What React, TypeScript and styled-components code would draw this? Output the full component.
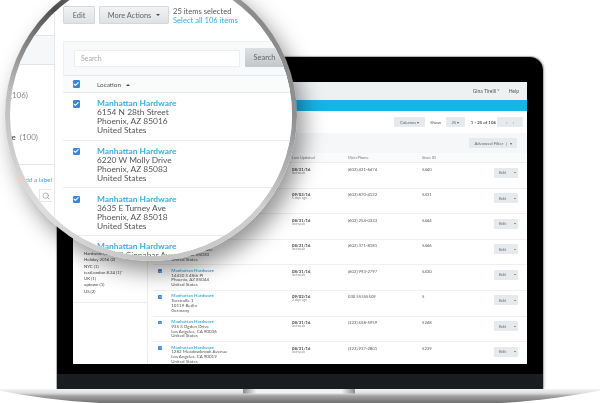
import React from "react";
import styled, { createGlobalStyle } from "styled-components";
import { Check, Search } from "lucide-react";

const GlobalStyle = createGlobalStyle`
    html, body {
        margin: 0;
        padding: 0;
        background: #fff;
    }
`;

const Page = styled.div`
    position: relative;
    width: 600px;
    height: 403px;
    padding-top: 57px;
    box-sizing: border-box;
    overflow: hidden;
    background: #fff;
    font-family: Lato, "Open Sans", sans-serif;
    color: #555;
    filter: blur(0.35px);
`;

/* laptop */
const Lid = styled.div`
    width: 486px;
    height: 332px;
    margin: 0 auto;
    box-sizing: border-box;
    padding: 25px 16px 0;
    border-radius: 13px 13px 0 0;
    background: linear-gradient(#000 0, #000 317px, #1a1d20 317px);
    box-shadow: 0 0 0 1px #b5b5b5, 1px 0 3px rgba(0, 0, 0, 0.25);
`;

const Screen = styled.div`
    height: 282px;
    overflow: hidden;
    background: #fff;
`;

const TopBar = styled.div`
    height: 18px;
    display: flex;
    align-items: center;
    justify-content: flex-end;
    gap: 9px;
    padding-right: 8px;
    background: #eef1f2;
    font-size: 5px;
`;

const BlueBar = styled.div`
    height: 11px;
    background: #17b4e9;
`;

const Body = styled.div`
    display: grid;
    grid-template-columns: 75px 1fr;
`;

const Side = styled.div`
    height: 253px;
    border-right: 1px solid #ececec;
    box-sizing: border-box;
`;

const TagList = styled.div`
    padding: 140px 0 7px 11px;
    border-bottom: 1px solid #ececec;
`;

const Tag = styled.div`
    height: 6.3px;
    font-size: 4.3px;
    line-height: 6.3px;
    color: #444;
    white-space: nowrap;
`;

const Main = styled.div`
    padding-left: 5px;
`;

const ToolRow = styled.div`
    height: 22px;
    display: flex;
    align-items: center;
    justify-content: flex-end;
    gap: 5px;
    padding-right: 4px;
    font-size: 4.4px;
`;

const SmallButton = styled.div<{ $w: number }>`
    width: ${(p) => p.$w}px;
    height: 10px;
    display: flex;
    align-items: center;
    justify-content: center;
    background: #e6eaec;
    border-radius: 1px;
    font-size: 4.2px;
    color: #666;
`;

const RangeText = styled.span`
    font-weight: 700;
    margin: 0 -4px 0 1px;
`;

const FilterPanel = styled.div`
    height: 20px;
    display: flex;
    align-items: center;
    justify-content: flex-end;
    padding-right: 10px;
    background: #f5f7f8;
`;

const ColumnGrid = styled.div`
    display: grid;
    grid-template-columns: 139px 56px 74px 72px 32px;
`;

const HeadRow = styled(ColumnGrid)`
    height: 10px;
    align-items: center;
    font-size: 3.9px;
    color: #777;
    background: #fafbfb;
    border-bottom: 1px solid #eee;
    box-sizing: border-box;
`;

const TableRow = styled(ColumnGrid)`
    height: 25.6px;
    box-sizing: border-box;
    font-size: 4.5px;
    border-bottom: 1px solid #f0f0f0;
`;

const DateCell = styled.div`
    padding-top: 3.5px;
    font-size: 4.2px;
    line-height: 5px;
    font-weight: 700;
    color: #444;
`;

const Ago = styled.div`
    font-size: 3.2px;
    line-height: 3.6px;
    font-weight: 400;
    color: #888;
`;

const PlainCell = styled.div`
    padding-top: 3.5px;
    font-size: 4.2px;
    line-height: 5px;
    color: #555;
`;

const EditCell = styled.div`
    padding-top: 4.5px;
`;

const EditGroup = styled.div`
    width: 24px;
    height: 10px;
    display: grid;
    grid-template-columns: 17px 7px;
    align-items: center;
    justify-items: center;
    background: #e6eaec;
    border-radius: 1px;
    font-size: 4.2px;
    color: #666;
`;

const Caret = styled.span`
    width: 0;
    height: 0;
    border-left: 1.3px solid transparent;
    border-right: 1.3px solid transparent;
    border-top: 1.5px solid #444;
`;

/* shared between the laptop table and the lens, sizes in em */
const AddressGrid = styled.div`
    display: grid;
    grid-template-columns: 4.05em 1fr;
    padding-top: 0.76em;
`;

const BoxCell = styled.div`
    padding: 0.12em 0 0 1.19em;
`;

const Box = styled.span`
    display: flex;
    align-items: center;
    justify-content: center;
    width: 0.86em;
    height: 0.86em;
    border-radius: 0.14em;
    background: #3a86d4;
    color: #fff;
`;

const Name = styled.div`
    line-height: 1.07em;
    color: #38aede;
    font-weight: 700;
    white-space: nowrap;
`;

const Line = styled.div`
    line-height: 1.07em;
    color: #555;
    white-space: nowrap;
`;

/* base */
const Base = styled.svg`
    display: block;
    width: 600px;
    height: 14px;
`;

/* lens */
const Lens = styled.div`
    position: absolute;
    left: 5px;
    top: -31px;
    width: 292px;
    height: 292px;
    box-sizing: border-box;
    padding: 5px;
    border-radius: 50%;
    background: conic-gradient(#d0d0d0 0deg, #8a8a8a 45deg, #8f8f8f 90deg, #cfcfcf 130deg, #c4c4c4 180deg, #dedede 230deg, #bdbdbd 280deg, #4d4d4d 318deg, #777 335deg, #d0d0d0 360deg);
    box-shadow: 7px 11px 22px rgba(0, 0, 0, 0.42);
`;

const LensView = styled.div`
    width: 282px;
    height: 282px;
    border-radius: 50%;
    overflow: hidden;
    background: #fff;
    display: grid;
    grid-template-columns: 45px 320px;
`;

const LensSide = styled.div`
    height: 282px;
    box-sizing: border-box;
    border-right: 1px solid #e8e8e8;
    font-size: 8px;
    color: #888;
`;

const SideTop = styled.div`
    height: 62px;
    border-bottom: 1px solid #e4e4e4;
    box-sizing: border-box;
`;

const SideBand = styled.div`
    height: 29px;
    background: #f6f7f8;
    border-bottom: 1px solid #e4e4e4;
    box-sizing: border-box;
`;

const Facets = styled.div`
    height: 100px;
    box-sizing: border-box;
    padding-top: 24px;
    border-bottom: 1px solid #e4e4e4;
`;

const Facet = styled.div<{ $end: number; $gap: number }>`
    display: flex;
    justify-content: flex-end;
    gap: 4px;
    width: ${(p) => p.$end}px;
    height: 12px;
    line-height: 12px;
    margin-bottom: ${(p) => p.$gap}px;
    white-space: nowrap;
    b {
        color: #555;
    }
`;

const LabelBlock = styled.div`
    padding: 10px 2px 0 0;
    text-align: right;
    font-size: 6.4px;
    line-height: 10px;
    color: #38aede;
    white-space: nowrap;
`;

const IconBox = styled.div`
    width: 12px;
    height: 11px;
    margin: 4px 0 0 auto;
    display: flex;
    align-items: center;
    justify-content: center;
    border: 1px solid #e8e8e8;
    border-right: 0;
    color: #777;
`;

const LensMain = styled.div`
    padding: 32px 0 0 8px;
`;

const LensTools = styled.div`
    height: 18px;
    display: flex;
    gap: 4px;
    margin-bottom: 17px;
`;

const LensButton = styled.div<{ $w: number }>`
    width: ${(p) => p.$w}px;
    display: flex;
    align-items: center;
    justify-content: center;
    gap: 5px;
    box-sizing: border-box;
    border: 1px solid #d5d8da;
    border-radius: 1px;
    background: linear-gradient(#f1f3f4, #dfe2e4);
    font-size: 7.4px;
    color: #666;
`;

const LensCaret = styled.span`
    width: 0;
    height: 0;
    border-left: 2px solid transparent;
    border-right: 2px solid transparent;
    border-top: 2.4px solid #444;
`;

const Selected = styled.div`
    margin-left: 0;
    padding-top: 1px;
    font-size: 7.6px;
    line-height: 9px;
    color: #555;
    a {
        display: block;
        color: #38aede;
    }
`;

const LensPanel = styled.div`
    width: 312px;
    background: #fff;
`;

const SearchRow = styled.div`
    height: 35px;
    box-sizing: border-box;
    padding: 8px 0 0 10px;
    display: flex;
    align-items: flex-start;
    gap: 5px;
    background: #f7f9fa;
    border: 1px solid #eef1f2;
    border-bottom: 1px solid #e6e9eb;
`;

const SearchInput = styled.div`
    width: 166px;
    height: 17px;
    box-sizing: border-box;
    padding-left: 6px;
    background: #fff;
    border: 1px solid #eceef0;
    font-size: 7px;
    line-height: 15px;
    color: #aaa;
`;

const SearchButton = styled.div`
    width: 39px;
    height: 19px;
    margin-top: -2px;
    display: flex;
    align-items: center;
    justify-content: center;
    border-radius: 1px;
    background: linear-gradient(#dde0e2, #c3c7ca);
    font-size: 7.4px;
    color: #666;
`;

const LensHead = styled.div`
    height: 17px;
    display: grid;
    grid-template-columns: 34px 1fr;
    align-items: center;
    box-sizing: border-box;
    background: #fafbfb;
    border-bottom: 1px solid #e6e9eb;
    font-size: 6.4px;
    color: #555;
`;

const LensHeadBox = styled.div`
    font-size: 8.4px;
    padding-left: 10px;
`;

const LensRow = styled.div`
    height: 47.6px;
    box-sizing: border-box;
    font-size: 8.4px;
    border-bottom: 1px solid #e9ebec;
`;

const Up = styled.span`
    display: inline-block;
    margin-left: 5px;
    vertical-align: 1px;
    border-left: 2px solid transparent;
    border-right: 2px solid transparent;
    border-bottom: 2.4px solid #444;
`;

interface IRow {
    lines: string[];
    date: string;
    ago: string;
    phone: string;
    store: string;
}

const rows: IRow[] = [
    { lines: ["6154 N 28th Street", "Phoenix, AZ 85016", "United States"], date: "08/31/16", ago: "last week", phone: "(602) 431-6474", store: "5440" },
    { lines: ["6220 W Molly Drive", "Phoenix, AZ 85083", "United States"], date: "09/03/16", ago: "5 days ago", phone: "(602) 870-4122", store: "5431" },
    { lines: ["3635 E Turney Ave", "Phoenix, AZ 85018", "United States"], date: "08/31/16", ago: "last week", phone: "(602) 254-0333", store: "5444" },
    { lines: ["1610 E Cinnabar Ave", "Phoenix, AZ 85020", "United States"], date: "08/31/16", ago: "last week", phone: "(602) 371-8181", store: "5446" },
    { lines: ["14430 S 48th Pl", "Phoenix, AZ 85044", "United States"], date: "08/31/16", ago: "last week", phone: "(602) 993-2797", store: "5430" },
    { lines: ["Torstraße 1", "10119 Berlin", "Germany"], date: "09/02/16", ago: "2 days ago", phone: "030 55555509", store: "5" },
    { lines: ["935 S Ogden Drive", "Los Angeles, CA 90036", "United States"], date: "08/31/16", ago: "last week", phone: "(323) 658-5959", store: "5248" },
    { lines: ["1282 Meadowbrook Avenue", "Los Angeles, CA 90019", "United States"], date: "08/31/16", ago: "last week", phone: "(323) 937-2801", store: "5239" },
];

const tags = ["Hardware (100)", "Holiday 2016 (2)", "NYC (1)", "testLondon 8.24 (1)*", "UK (1)", "uptown (1)", "US (2)"];

const CheckBox = () => (
    <Box>
        <Check size="0.75em" strokeWidth={4} />
    </Box>
);

const Address = ({ lines }: { lines: string[] }) => (
    <AddressGrid>
        <BoxCell>
            <CheckBox />
        </BoxCell>
        <div>
            <Name>Manhattan Hardware</Name>
            {lines.map((l) => (
                <Line key={l}>{l}</Line>
            ))}
        </div>
    </AddressGrid>
);

export default function App() {
    return (
        <Page>
            <GlobalStyle />
            <Lid>
                <Screen>
                    <TopBar>
                        <span>Gina Tirelli ˅</span>
                        <span>Help</span>
                    </TopBar>
                    <BlueBar />
                    <Body>
                        <Side>
                            <TagList>
                                {tags.map((t) => (
                                    <Tag key={t}>{t}</Tag>
                                ))}
                            </TagList>
                        </Side>
                        <Main>
                            <ToolRow>
                                <SmallButton $w={31}>Columns ▾</SmallButton>
                                <span>Show</span>
                                <SmallButton $w={19}>25 ▾</SmallButton>
                                <RangeText>1 - 25 of 106</RangeText>
                                <SmallButton $w={26}>‹ &nbsp; &nbsp; ›</SmallButton>
                            </ToolRow>
                            <FilterPanel>
                                <SmallButton $w={48}>Advanced Filter &nbsp; | &nbsp;▾</SmallButton>
                            </FilterPanel>
                            <HeadRow>
                                <span />
                                <span>Last Updated</span>
                                <span>Main Phone</span>
                                <span>Store ID</span>
                            </HeadRow>
                            {rows.map((r) => (
                                <TableRow key={r.store}>
                                    <Address lines={r.lines} />
                                    <DateCell>
                                        {r.date}
                                        <Ago>{r.ago}</Ago>
                                    </DateCell>
                                    <PlainCell>{r.phone}</PlainCell>
                                    <PlainCell>{r.store}</PlainCell>
                                    <EditCell>
                                        <EditGroup>
                                            <span>Edit</span>
                                            <Caret />
                                        </EditGroup>
                                    </EditCell>
                                </TableRow>
                            ))}
                        </Main>
                    </Body>
                </Screen>
            </Lid>
            <Base viewBox="0 0 600 14" preserveAspectRatio="none">
                <defs>
                    <linearGradient id="deck" x1="0" y1="0" x2="0" y2="1">
                        <stop offset="0" stopColor="#f4f4f4" />
                        <stop offset="0.3" stopColor="#dcdcdc" />
                        <stop offset="0.5" stopColor="#a2a2a2" />
                        <stop offset="1" stopColor="#6f6f6f" />
                    </linearGradient>
                    <linearGradient id="notch" x1="0" y1="0" x2="1" y2="0">
                        <stop offset="0" stopColor="#8c8c8c" />
                        <stop offset="0.12" stopColor="#f2f2f2" />
                        <stop offset="0.88" stopColor="#f2f2f2" />
                        <stop offset="1" stopColor="#8c8c8c" />
                    </linearGradient>
                </defs>
                <path d="M0 0 L600 0 L600 1.5 C570 7 540 12 500 14 L100 14 C60 12 25 7 0 1.5 Z" fill="url(#deck)" />
                <path d="M243 0 L355 0 L355 4.5 L243 4.5 Z" fill="url(#notch)" />
            </Base>
            <Lens>
                <LensView>
                    <LensSide>
                        <SideTop />
                        <SideBand />
                        <Facets>
                            <Facet $end={18} $gap={30}>(106)</Facet>
                            <Facet $end={28} $gap={0}>
                                <b>Hardware</b>
                                <span>(100)</span>
                            </Facet>
                        </Facets>
                        <LabelBlock>
                            Add a label
                            <IconBox>
                                <Search size={8} strokeWidth={1.6} />
                            </IconBox>
                        </LabelBlock>
                    </LensSide>
                    <LensMain>
                        <LensTools>
                            <LensButton $w={32}>Edit</LensButton>
                            <LensButton $w={70}>
                                More Actions <LensCaret />
                            </LensButton>
                            <Selected>
                                25 items selected
                                <a>Select all 106 items</a>
                            </Selected>
                        </LensTools>
                        <LensPanel>
                            <SearchRow>
                                <SearchInput>Search</SearchInput>
                                <SearchButton>Search</SearchButton>
                            </SearchRow>
                            <LensHead>
                                <LensHeadBox>
                                    <CheckBox />
                                </LensHeadBox>
                                <span>
                                    Location
                                    <Up />
                                </span>
                            </LensHead>
                            {rows.slice(0, 4).map((r) => (
                                <LensRow key={r.store}>
                                    <Address lines={r.lines} />
                                </LensRow>
                            ))}
                        </LensPanel>
                    </LensMain>
                </LensView>
            </Lens>
        </Page>
    );
}
